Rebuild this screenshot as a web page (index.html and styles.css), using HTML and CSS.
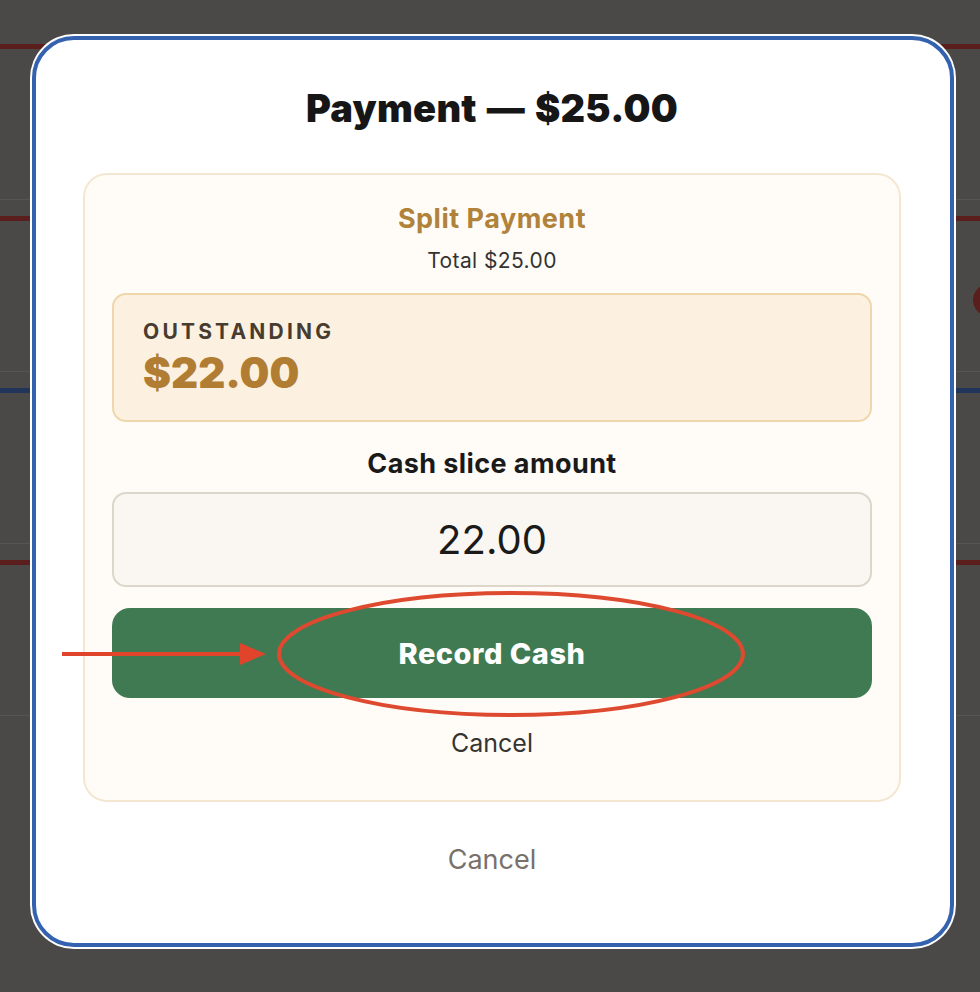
FILE: index.html
```html
<!DOCTYPE html>
<html>
<head>
<meta charset="utf-8">
<link rel="stylesheet" href="styles.css">
</head>
<body>
<div class="page">
  <div class="row row-red"></div>
  <div class="row row-red"><span class="row-blob"></span></div>
  <div class="row row-blue"></div>
  <div class="row row-red"></div>
</div>

<div class="modal">
  <h1 class="title">Payment — $25.00</h1>
  <div class="split">
    <div class="split-title">Split Payment</div>
    <div class="split-total">Total $25.00</div>
    <div class="outstanding">
      <div class="out-label">OUTSTANDING</div>
      <div class="out-amount">$22.00</div>
    </div>
    <div class="field-label">Cash slice amount</div>
    <div class="field-input">22.00</div>
    <div class="record-btn">Record Cash</div>
    <div class="inner-cancel">Cancel</div>
  </div>
  <div class="outer-cancel">Cancel</div>
</div>

<svg class="annot" width="980" height="992" viewBox="0 0 980 992">
  <line x1="62" y1="654" x2="244" y2="654" stroke="#e0442b" stroke-width="4"/>
  <polygon points="240,643 266,654 240,665" fill="#e0442b"/>
  <ellipse cx="511" cy="654" rx="232" ry="61" fill="none" stroke="#de4a2f" stroke-width="4"/>
</svg>
</body>
</html>
```
FILE: styles.css
```css
html, body {
  margin: 0;
  padding: 0;
}
body {
  width: 980px;
  height: 992px;
  overflow: hidden;
  background: #4a4947;
  font-family: Inter, "Noto Sans", sans-serif;
  position: relative;
}
.page {
  display: flex;
  flex-direction: column;
  padding-top: 28px;
}
.row {
  height: 172px;
  box-sizing: border-box;
  border-top: 16px solid #4a4947;
  position: relative;
}
.row::before {
  content: "";
  display: block;
  height: 5px;
  background: #5a1f1c;
}
.row::after {
  content: "";
  position: absolute;
  left: 0;
  right: 0;
  bottom: 0;
  height: 1px;
  background: #565552;
}
.row-blue::before {
  background: #213459;
}
.row-blob {
  position: absolute;
  left: 973px;
  top: 68px;
  width: 32px;
  height: 32px;
  border-radius: 50%;
  border: 8px solid #5a1f1c;
  box-sizing: border-box;
}
.modal {
  position: absolute;
  left: 32px;
  top: 36px;
  width: 922px;
  height: 911px;
  box-sizing: border-box;
  background: #fff;
  border: 4px solid #3562ae;
  box-shadow: 0 0 0 2px #fff;
  border-radius: 42px;
  padding: 46px 49px 0 47px;
  display: flex;
  flex-direction: column;
  align-items: stretch;
}
.title {
  margin: 0;
  text-align: center;
  font-size: 38px;
  line-height: 44px;
  font-weight: 900;
  letter-spacing: 0.3px;
  word-spacing: 2px;
  color: #161616;
}
.split {
  margin-top: 43px;
  background: #fffcf7;
  border: 2px solid #f3e7d2;
  border-radius: 24px;
  padding: 29px 27px 42px 27px;
  display: flex;
  flex-direction: column;
  align-items: stretch;
  text-align: center;
}
.split-title {
  font-size: 27px;
  line-height: 30px;
  font-weight: 700;
  letter-spacing: 0.5px;
  color: #b0823a;
}
.split-total {
  margin-top: 15px;
  font-size: 21px;
  line-height: 24px;
  letter-spacing: 0.4px;
  color: #333;
}
.outstanding {
  margin-top: 20px;
  background: #fcf1e0;
  border: 2px solid #efd7ab;
  border-radius: 14px;
  padding: 25px 29px;
  text-align: left;
}
.out-label {
  font-size: 21px;
  line-height: 24px;
  font-weight: 700;
  letter-spacing: 3.2px;
  color: #473c2f;
}
.out-amount {
  font-size: 42px;
  line-height: 44px;
  font-weight: 900;
  color: #b07d33;
  margin-top: 7px;
}
.field-label {
  margin-top: 27px;
  font-size: 27px;
  line-height: 30px;
  font-weight: 700;
  letter-spacing: 0.4px;
  color: #1a1a1a;
}
.field-input {
  margin-top: 13px;
  height: 95px;
  box-sizing: border-box;
  background: #faf7f2;
  border: 2px solid #ddd6cb;
  border-radius: 14px;
  display: flex;
  align-items: center;
  justify-content: center;
  font-size: 40px;
  color: #1a1a1a;
}
.record-btn {
  margin-top: 21px;
  height: 90px;
  background: #3f7a52;
  border-radius: 18px;
  display: flex;
  align-items: center;
  justify-content: center;
  font-size: 29px;
  font-weight: 800;
  letter-spacing: 0.5px;
  color: #fff;
}
.inner-cancel {
  margin-top: 30px;
  font-size: 25px;
  line-height: 30px;
  color: #363432;
}
.outer-cancel {
  margin-top: 42px;
  text-align: center;
  font-size: 27px;
  line-height: 32px;
  color: #78716a;
}
.annot {
  position: absolute;
  left: 0;
  top: 0;
}
```
